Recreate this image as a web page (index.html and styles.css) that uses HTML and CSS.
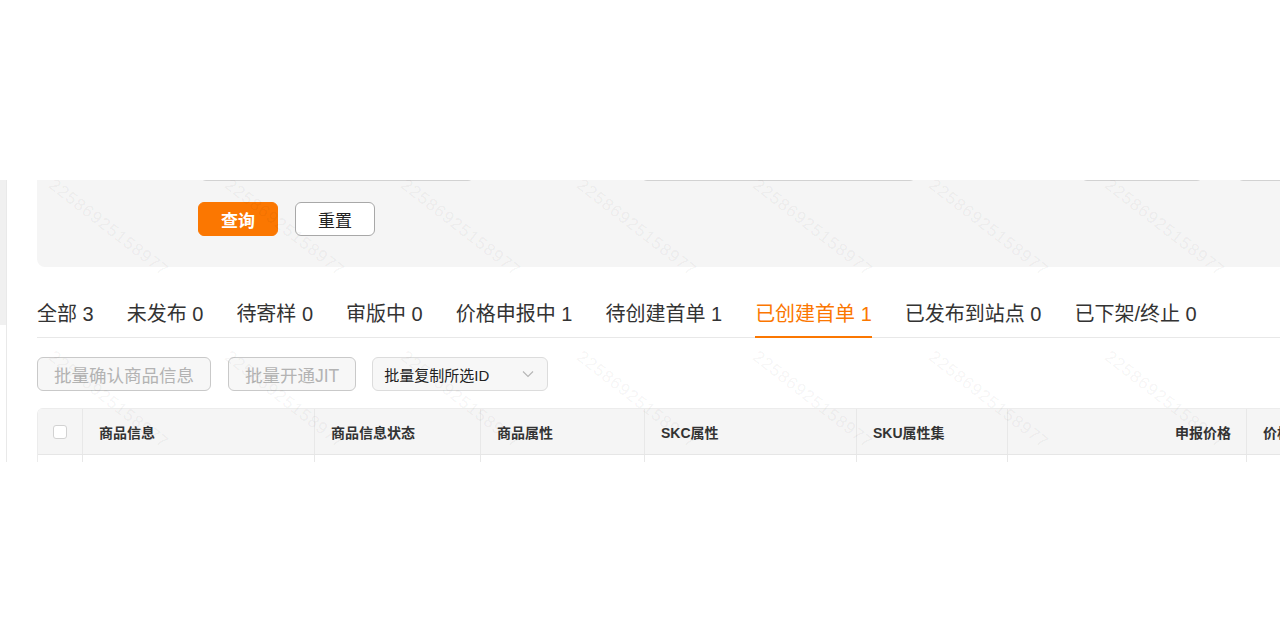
FILE: index.html
```html
<!DOCTYPE html>
<html lang="zh-CN">
<head>
<meta charset="utf-8">
<title>商品列表</title>
<link rel="stylesheet" href="styles.css">
</head>
<body>
<div class="page">
  <div class="viewport">
    <div class="sidebar"><div class="sidebar-thumb"></div></div>
    <div class="main">
      <div class="filter-panel">
        <div class="field-row">
          <div class="field f1"><span class="field-input w1"></span></div>
          <div class="field f2"><span class="field-input w2"></span></div>
          <div class="field f3"><span class="field-input w3"><span class="addon"></span></span></div>
          <div class="field f4"><span class="field-input w4"></span></div>
        </div>
        <div class="action-row">
          <button class="btn btn-primary">查询</button>
          <button class="btn btn-default">重置</button>
        </div>
      </div>

      <div class="tabs">
        <div class="tab">全部 3</div>
        <div class="tab">未发布 0</div>
        <div class="tab">待寄样 0</div>
        <div class="tab">审版中 0</div>
        <div class="tab">价格申报中 1</div>
        <div class="tab">待创建首单 1</div>
        <div class="tab active">已创建首单 1</div>
        <div class="tab">已发布到站点 0</div>
        <div class="tab">已下架/终止 0</div>
      </div>

      <div class="batch-row">
        <button class="btn btn-disabled">批量确认商品信息</button>
        <button class="btn btn-disabled">批量开通JIT</button>
        <div class="select">
          <span class="select-text">批量复制所选ID</span>
          <svg class="chevron" width="12" height="8" viewBox="0 0 12 8"><path d="M1 1.5 L6 6.5 L11 1.5" fill="none" stroke="#b5b5b5" stroke-width="1.1"/></svg>
        </div>
      </div>

      <div class="table">
        <div class="trow thead">
          <div class="cell c-check"><span class="checkbox"></span></div>
          <div class="cell c-info">商品信息</div>
          <div class="cell c-status">商品信息状态</div>
          <div class="cell c-attr">商品属性</div>
          <div class="cell c-skc">SKC属性</div>
          <div class="cell c-sku">SKU属性集</div>
          <div class="cell c-price">申报价格</div>
          <div class="cell c-more">价格</div>
        </div>
        <div class="trow tbody">
          <div class="cell c-check"></div>
          <div class="cell c-info"></div>
          <div class="cell c-status"></div>
          <div class="cell c-attr"></div>
          <div class="cell c-skc"></div>
          <div class="cell c-sku"></div>
          <div class="cell c-price"></div>
          <div class="cell c-more"></div>
        </div>
      </div>
    </div>

    <div class="watermark">
      <span>22586925158977</span><span>22586925158977</span><span>22586925158977</span><span>22586925158977</span><span>22586925158977</span><span>22586925158977</span><span>22586925158977</span><span>22586925158977</span>
      <span>22586925158977</span><span>22586925158977</span><span>22586925158977</span><span>22586925158977</span><span>22586925158977</span><span>22586925158977</span><span>22586925158977</span><span>22586925158977</span>
    </div>
  </div>
</div>
</body>
</html>
```
FILE: styles.css
```css
* { box-sizing: border-box; }

html, body {
  margin: 0;
  padding: 0;
  background: #ffffff;
}

body {
  font-family: "Liberation Sans", "Noto Sans CJK SC", sans-serif;
  color: #333333;
  width: 1280px;
  height: 640px;
  overflow: hidden;
}

.page {
  padding-top: 180px;
}

.viewport {
  position: relative;
  height: 282px;
  overflow: hidden;
  display: flex;
}

.sidebar {
  flex: 0 0 7px;
  border-right: 1px solid #e9e9e9;
}

.sidebar-thumb {
  height: 145px;
  background: #f0f0f0;
}

.main {
  flex: 0 0 auto;
  width: 1400px;
  padding-left: 30px;
}

/* filter panel */
.filter-panel {
  margin-top: -51px;
  background: #f5f5f5;
  border-radius: 8px;
  padding: 16px 0 31px 0;
}

.field-row {
  display: flex;
  height: 36px;
}

.field {
  display: flex;
}

.f1 { padding-left: 163px; }
.f2 { padding-left: 167px; }
.f3 { padding-left: 165px; }
.f4 { padding-left: 34px; }

.field-input {
  display: flex;
  justify-content: flex-end;
  height: 36px;
  background: #ffffff;
  border: 1px solid #d2d2d2;
  border-radius: 6px;
}

.w1 { width: 274px; }
.w2 { width: 275px; }
.w3 { width: 122px; }
.w4 { width: 200px; }

.addon {
  width: 38px;
  height: 100%;
  border-bottom: 1px solid #c0c0c0;
}

.action-row {
  display: flex;
  gap: 17px;
  margin-top: 21px;
  padding-left: 161px;
}

.btn {
  font-family: "Liberation Sans", "Noto Sans CJK SC", sans-serif;
  height: 34px;
  border-radius: 6px;
  padding: 0 16px;
  cursor: pointer;
  white-space: nowrap;
}

.btn-primary {
  width: 80px;
  background: #fb7701;
  border: 1px solid #fb7701;
  color: #ffffff;
  font-size: 17px;
  font-weight: 700;
}

.btn-default {
  width: 80px;
  background: #ffffff;
  border: 1px solid #a8a8a8;
  color: #222222;
  font-size: 17px;
}

/* tabs */
.tabs {
  display: flex;
  margin-top: 32px;
  height: 39px;
  border-bottom: 1px solid #e8e8e8;
  width: 1250px;
}

.tab {
  font-size: 20px;
  line-height: 28px;
  height: 39px;
  padding-top: 1px;
  padding-bottom: 8px;
  margin-right: 33px;
  border-bottom: 2px solid transparent;
  color: #333333;
  white-space: nowrap;
}

.tab.active {
  color: #fb7701;
  border-bottom-color: #fb7701;
}

/* batch actions */
.batch-row {
  display: flex;
  align-items: center;
  gap: 17px;
  margin-top: 19px;
}

.btn-disabled {
  background: #f7f7f7;
  border: 1px solid #c9c9c9;
  color: #b3b3b3;
  font-size: 17.5px;
  cursor: not-allowed;
}

.select {
  display: flex;
  align-items: center;
  justify-content: space-between;
  width: 176px;
  height: 34px;
  margin-left: -1px;
  padding: 0 12px 0 11px;
  background: #f7f7f7;
  border: 1px solid #dcdcdc;
  border-radius: 6px;
}

.select-text {
  font-size: 15px;
  color: #222222;
}

.chevron {
  margin-right: 1px;
}

/* table */
.table {
  margin-top: 17px;
  border-left: 1px solid #ececec;
  border-top-left-radius: 6px;
  overflow: hidden;
}

.trow {
  display: grid;
  grid-template-columns: 45px 232px 166px 164px 212px 151px 239px 200px;
}

.thead {
  height: 47px;
  background: #f5f5f5;
  border-top: 1px solid #ececec;
  border-bottom: 1px solid #e6e6e6;
}

.tbody {
  height: 60px;
}

.cell {
  display: flex;
  align-items: center;
  border-right: 1px solid #e8e8e8;
  padding: 0 16px;
  font-size: 14px;
  font-weight: 700;
  color: #333333;
  white-space: nowrap;
}

.c-check {
  justify-content: center;
  padding: 0;
}

.c-price {
  justify-content: flex-end;
  padding-right: 15px;
}

.checkbox {
  display: block;
  width: 14px;
  height: 14px;
  background: #ffffff;
  border: 1px solid #d2d2d2;
  border-radius: 3px;
}

/* watermark overlay */
.watermark {
  position: absolute;
  left: 57px;
  top: -5px;
  display: grid;
  grid-template-columns: repeat(8, 176px);
  grid-auto-rows: 172px;
  pointer-events: none;
}

.watermark span {
  display: block;
  width: 176px;
  height: 172px;
  font-family: "Liberation Sans", sans-serif;
  font-size: 17px;
  letter-spacing: 1px;
  color: rgba(0, 0, 0, 0.055);
  white-space: nowrap;
  transform: rotate(38deg);
  transform-origin: 0 0;
}
```
